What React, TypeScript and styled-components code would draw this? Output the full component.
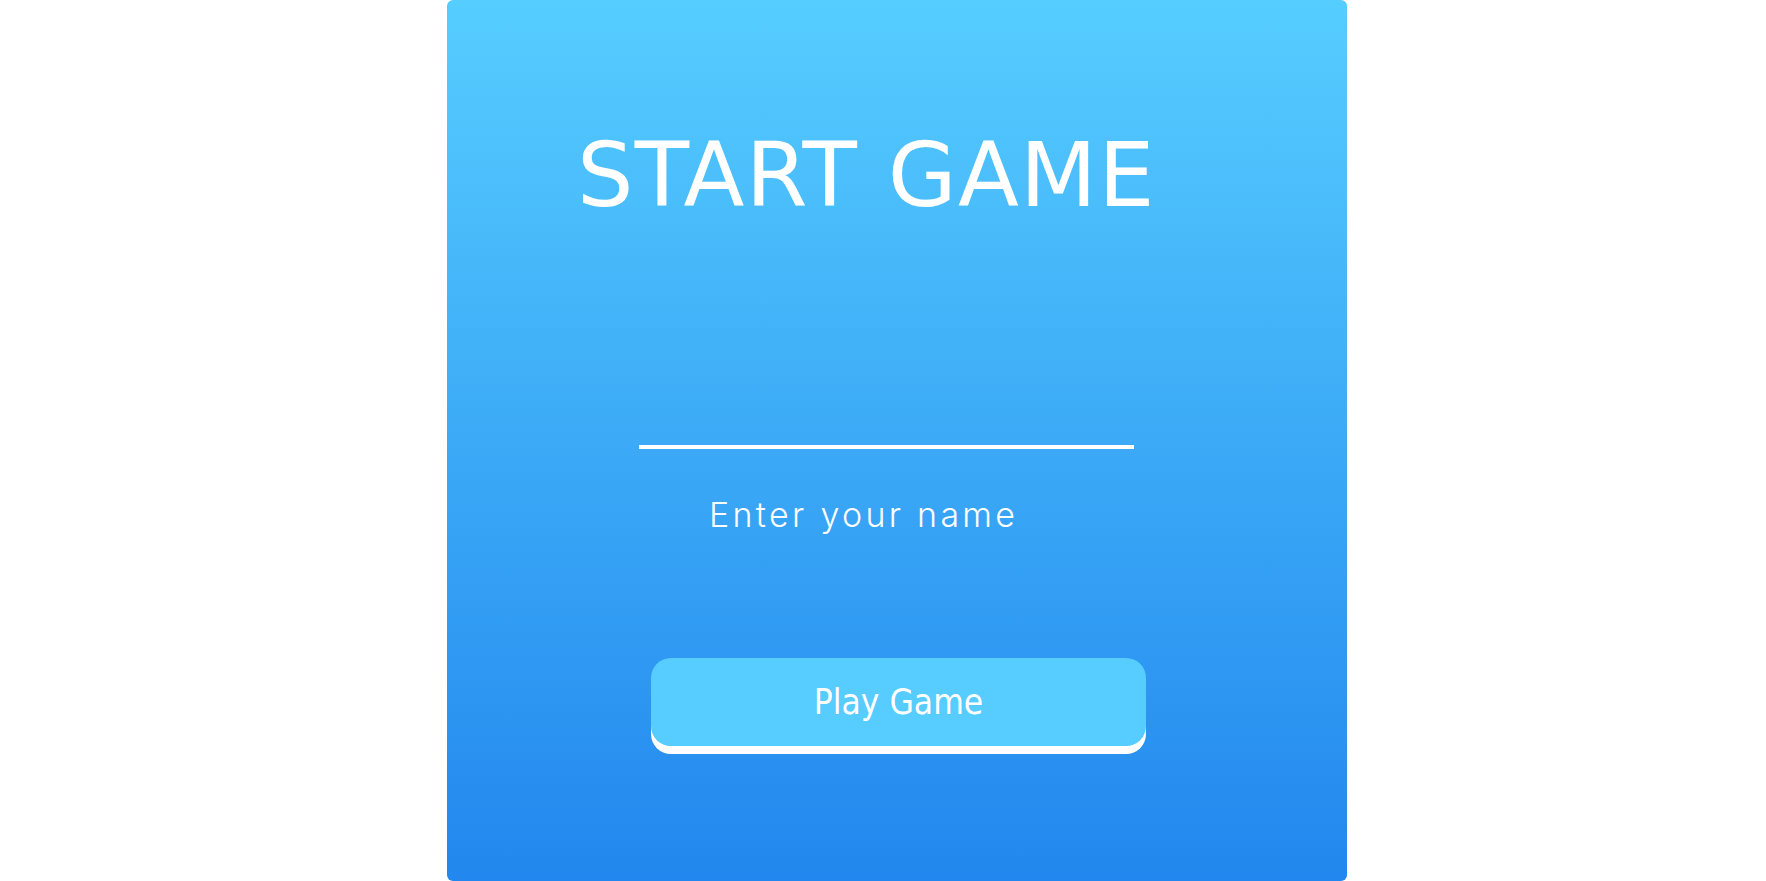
import React from "react";
import styled, { createGlobalStyle } from "styled-components";

const GlobalStyle = createGlobalStyle`
  html, body {
    margin: 0;
    padding: 0;
    background: #ffffff;
    font-family: "DejaVu Sans", sans-serif;
  }
`;

const Page = styled.div`
  display: flex;
  justify-content: center;
  padding-left: 28px;
  height: 881px;
`;

const Card = styled.div`
  width: 900px;
  height: 881px;
  border-radius: 6px;
  background: linear-gradient(180deg, #56cdff 0%, #2287ee 100%);
  display: flex;
  flex-direction: column;
  align-items: flex-start;
`;

const Title = styled.h1`
  margin: 131px 0 0 130px;
  font-family: "DejaVu Sans", sans-serif;
  font-weight: 400;
  font-size: 89px;
  line-height: 1;
  letter-spacing: 1.3px;
  color: #ffffff;
  white-space: nowrap;
`;

const NameInput = styled.input`
  margin: 189px 0 0 192px;
  width: 495px;
  height: 40px;
  box-sizing: border-box;
  padding: 0;
  border: none;
  border-bottom: 4px solid #ffffff;
  background: transparent;
  outline: none;
  color: #ffffff;
  font-family: "Inter", sans-serif;
  font-size: 24px;
`;

const Label = styled.label`
  margin: 49px 0 0 262px;
  font-family: "Inter", sans-serif;
  font-weight: 300;
  font-size: 34px;
  line-height: 1;
  letter-spacing: 3.3px;
  color: #ffffff;
  white-space: nowrap;
`;

const PlayButton = styled.button`
  margin: 126px 0 0 204px;
  width: 495px;
  height: 88px;
  border: none;
  border-radius: 20px;
  background: #56ccff;
  box-shadow: 0 8px 0 #ffffff;
  color: #ffffff;
  font-family: "DejaVu Sans Condensed", "DejaVu Sans", sans-serif;
  font-size: 35px;
  padding: 0;
  cursor: pointer;
`;

export default function App() {
  return (
    <>
      <GlobalStyle />
      <Page>
        <Card>
          <Title>START GAME</Title>
          <NameInput id="name" type="text" />
          <Label htmlFor="name">Enter your name</Label>
          <PlayButton>Play Game</PlayButton>
        </Card>
      </Page>
    </>
  );
}
